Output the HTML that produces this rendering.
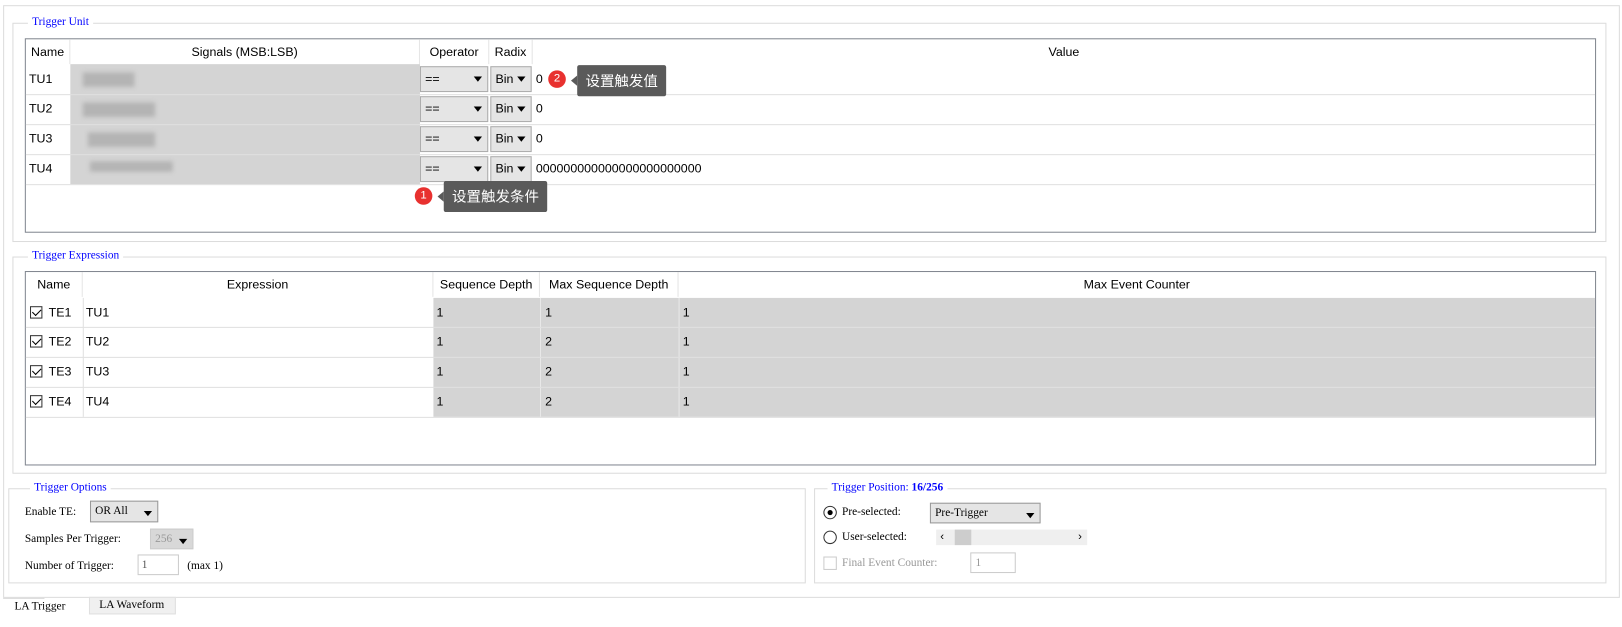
<!DOCTYPE html>
<html><head><meta charset="utf-8"><style>
*{box-sizing:border-box;margin:0;padding:0}
body{width:1622px;height:627px;background:#fff;position:relative;overflow:hidden;font-family:"Liberation Sans","Noto Sans CJK SC",sans-serif;font-size:12px;color:#000}
#w{position:absolute;left:0;top:0;width:1568px;height:606px;transform:scale(1.0344);transform-origin:0 0}
.a{position:absolute}
.grp{position:absolute;border:1px solid #dcdcdc}
.gt{position:absolute;top:-8px;left:14px;background:#fff;padding:0 4px;font-family:"Liberation Serif","Noto Serif CJK SC",serif;font-size:11px;color:#0000ff}
.tbl{position:absolute;border:1px solid #828790;background:#fff}
.h{position:absolute;text-align:center;font-size:12px;line-height:24px;border-right:1px solid #e5e5e5}
.c{position:absolute;font-size:12px;line-height:28px;padding-left:3px}
.rl{position:absolute;height:1px;background:#e0e0e0}
.dd{position:absolute;background:#e5e5e5;border:1px solid #adadad;font-size:12px;line-height:22px;padding-left:4px}
.dd:after{content:"";position:absolute;right:5px;top:9px;border:4px solid transparent;border-top:5px solid #000;border-bottom:0}
.tip{position:absolute;background:#5a5a5a;color:#fff;font-size:14px;line-height:30px;padding:0 8px;border-radius:2px;font-family:"Noto Sans CJK SC",sans-serif}
.tip:before{content:"";position:absolute;left:-6px;top:10px;border:5px solid transparent;border-right:6px solid #5a5a5a;border-left:0}
.bd{position:absolute;width:17px;height:17px;border-radius:50%;background:#e8312f;color:#fff;font-size:11px;text-align:center;line-height:17px}
.s{font-family:"Liberation Serif",serif;font-size:11px;position:absolute}
.cb{position:absolute;width:12px;height:12px;border:1px solid #333;background:#fff}
.cb:after{content:"";position:absolute;left:3px;top:0px;width:4px;height:7px;border:solid #000;border-width:0 1px 1px 0;transform:rotate(45deg)}
.blur{position:absolute;background:#b4b4b4;filter:blur(2px);height:14px}
</style></head><body><div id="w">
<div class="a" style="left:3px;top:5px;width:1563px;height:573px;border:1px solid #dcdcdc"></div>

<div class="grp" style="left:12px;top:22px;width:1541px;height:212px"><div class="gt">Trigger Unit</div></div>
<div class="tbl" style="left:24px;top:37px;width:1519px;height:188px">
<div class="h" style="left:0;top:0;width:43px">Name</div>
<div class="h" style="left:43px;top:0;width:338px">Signals (MSB:LSB)</div>
<div class="h" style="left:381px;top:0;width:67px">Operator</div>
<div class="h" style="left:448px;top:0;width:42px">Radix</div>
<div class="h" style="left:490px;top:0;width:1027px;border:0">Value</div>
<div class="a" style="left:43px;top:24px;width:338px;height:116px;background:#d4d4d4"></div>
<div class="blur" style="left:55px;top:32px;width:50px"></div>
<div class="blur" style="left:55px;top:61px;width:70px"></div>
<div class="blur" style="left:60px;top:90px;width:65px"></div>
<div class="blur" style="left:62px;top:118px;width:80px;height:10px"></div>
<div class="rl" style="left:0;top:53px;width:1517px"></div>
<div class="rl" style="left:0;top:82px;width:1517px"></div>
<div class="rl" style="left:0;top:111px;width:1517px"></div>
<div class="rl" style="left:0;top:140px;width:1517px"></div>
<div class="c" style="left:0;top:24px">TU1</div><div class="c" style="left:0;top:53px">TU2</div><div class="c" style="left:0;top:82px">TU3</div><div class="c" style="left:0;top:111px">TU4</div>
<div class="dd" style="left:381px;top:26px;width:66px;height:25px">==</div>
<div class="dd" style="left:381px;top:55px;width:66px;height:25px">==</div>
<div class="dd" style="left:381px;top:84px;width:66px;height:25px">==</div>
<div class="dd" style="left:381px;top:113px;width:66px;height:25px">==</div>
<div class="dd" style="left:449px;top:26px;width:40px;height:25px">Bin</div>
<div class="dd" style="left:449px;top:55px;width:40px;height:25px">Bin</div>
<div class="dd" style="left:449px;top:84px;width:40px;height:25px">Bin</div>
<div class="dd" style="left:449px;top:113px;width:40px;height:25px">Bin</div>
<div class="c" style="left:490px;top:24px">0</div><div class="c" style="left:490px;top:53px">0</div><div class="c" style="left:490px;top:82px">0</div><div class="c" style="left:490px;top:111px">000000000000000000000000</div>
</div>
<div class="bd" style="left:530px;top:68px">2</div>
<div class="tip" style="left:558px;top:63px">设置触发值</div>
<div class="bd" style="left:401px;top:181px">1</div>
<div class="tip" style="left:429px;top:175px">设置触发条件</div>

<div class="grp" style="left:12px;top:248px;width:1541px;height:210px"><div class="gt">Trigger Expression</div></div>
<div class="tbl" style="left:24px;top:262px;width:1519px;height:188px">
<div class="h" style="left:0;top:0;width:55px">Name</div>
<div class="h" style="left:55px;top:0;width:339px">Expression</div>
<div class="h" style="left:394px;top:0;width:103px">Sequence Depth</div>
<div class="h" style="left:497px;top:0;width:134px">Max Sequence Depth</div>
<div class="h" style="left:631px;top:0;width:886px;border:0">Max Event Counter</div>
<div class="a" style="left:394px;top:25px;width:1123px;height:115px;background:#d4d4d4"></div>
<div class="a" style="left:497px;top:25px;width:1px;height:115px;background:#e8e8e8"></div>
<div class="a" style="left:631px;top:25px;width:1px;height:115px;background:#e8e8e8"></div>
<div class="a" style="left:55px;top:25px;width:1px;height:115px;background:#e0e0e0"></div>
<div class="rl" style="left:0;top:53px;width:1517px"></div>
<div class="rl" style="left:0;top:82px;width:1517px"></div>
<div class="rl" style="left:0;top:111px;width:1517px"></div>
<div class="rl" style="left:0;top:140px;width:1517px"></div>
<div class="cb" style="left:4px;top:33px"></div><div class="cb" style="left:4px;top:61px"></div><div class="cb" style="left:4px;top:90px"></div><div class="cb" style="left:4px;top:119px"></div>
<div class="c" style="left:19px;top:25px">TE1</div><div class="c" style="left:19px;top:53px">TE2</div><div class="c" style="left:19px;top:82px">TE3</div><div class="c" style="left:19px;top:111px">TE4</div>
<div class="c" style="left:55px;top:25px">TU1</div><div class="c" style="left:55px;top:53px">TU2</div><div class="c" style="left:55px;top:82px">TU3</div><div class="c" style="left:55px;top:111px">TU4</div>
<div class="c" style="left:394px;top:25px">1</div><div class="c" style="left:394px;top:53px">1</div><div class="c" style="left:394px;top:82px">1</div><div class="c" style="left:394px;top:111px">1</div>
<div class="c" style="left:499px;top:25px">1</div><div class="c" style="left:499px;top:53px">2</div><div class="c" style="left:499px;top:82px">2</div><div class="c" style="left:499px;top:111px">2</div>
<div class="c" style="left:632px;top:25px">1</div><div class="c" style="left:632px;top:53px">1</div><div class="c" style="left:632px;top:82px">1</div><div class="c" style="left:632px;top:111px">1</div>
</div>

<div class="grp" style="left:8px;top:472px;width:771px;height:92px"><div class="gt" style="left:20px">Trigger Options</div></div>
<div class="s" style="left:24px;top:489px">Enable TE:</div>
<div class="dd" style="left:87px;top:484px;width:66px;height:21px;font-family:'Liberation Serif',serif;font-size:11px;line-height:19px;border-color:#999">OR All</div>
<div class="s" style="left:24px;top:515px">Samples Per Trigger:</div>
<div class="dd" style="left:145px;top:511px;width:42px;height:20px;font-family:'Liberation Serif',serif;font-size:11px;line-height:18px;color:#999;background:#d8d8d8;border-color:#ccc">256</div>
<div class="s" style="left:24px;top:541px">Number of Trigger:</div>
<div class="a" style="left:133px;top:536px;width:40px;height:20px;border:1px solid #ccc;font-family:'Liberation Serif',serif;font-size:11px;line-height:18px;padding-left:3px;color:#555">1</div>
<div class="s" style="left:181px;top:541px">(max 1)</div>

<div class="grp" style="left:787px;top:472px;width:766px;height:92px"><div class="gt" style="left:12px">Trigger Position: <b>16/256</b></div></div>
<div class="a" style="left:796px;top:489px;width:13px;height:13px;border:1px solid #333;border-radius:50%"><div class="a" style="left:3px;top:3px;width:5px;height:5px;border-radius:50%;background:#000"></div></div>
<div class="s" style="left:814px;top:489px">Pre-selected:</div>
<div class="dd" style="left:899px;top:486px;width:107px;height:20px;font-family:'Liberation Serif',serif;font-size:11px;line-height:18px;border-color:#999">Pre-Trigger</div>
<div class="a" style="left:796px;top:513px;width:13px;height:13px;border:1px solid #333;border-radius:50%"></div>
<div class="s" style="left:814px;top:513px">User-selected:</div>
<div class="a" style="left:905px;top:512px;width:146px;height:15px;background:#efefef;font-size:11px;line-height:15px"><span style="position:absolute;left:4px">‹</span><div class="a" style="left:18px;top:0;width:16px;height:15px;background:#cdcdcd"></div><span style="position:absolute;right:5px">›</span></div>
<div class="a" style="left:796px;top:538px;width:13px;height:13px;border:1px solid #ccc"></div>
<div class="s" style="left:814px;top:538px;color:#999">Final Event Counter:</div>
<div class="a" style="left:938px;top:534px;width:44px;height:20px;border:1px solid #ccc;font-family:'Liberation Serif',serif;font-size:11px;line-height:18px;padding-left:4px;color:#999">1</div>

<div class="a" style="left:3px;top:578px;width:40px;height:1px;background:#dcdcdc"></div>
<div class="s" style="left:14px;top:580px">LA Trigger</div>
<div class="a" style="left:86px;top:577px;width:84px;height:17px;background:#f0f0f0;border:1px solid #e0e0e0"></div>
<div class="s" style="left:96px;top:579px">LA Waveform</div>
</div></body></html>
